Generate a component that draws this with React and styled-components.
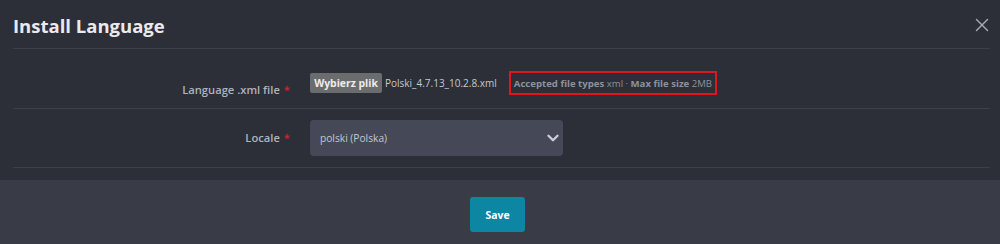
import React from 'react'
import styled, { createGlobalStyle } from 'styled-components'
import { ChevronDown, X } from 'lucide-react'

const GlobalStyle = createGlobalStyle`
  html, body {
    margin: 0;
    padding: 0;
    background: #2c2f38;
    font-family: "Open Sans", "Liberation Sans", sans-serif;
  }
`

const Modal = styled.div`
  width: 1000px;
  height: 244px;
  display: flex;
  flex-direction: column;
  background: #2c2f38;
`

const Header = styled.div`
  height: 48px;
  margin: 0 10px 0 13px;
  border-bottom: 1px solid #3c404b;
  display: flex;
  align-items: center;
  justify-content: space-between;
`

const Title = styled.h1`
  margin: 2px 0 0 0;
  font-size: 18.5px;
  font-weight: 700;
  color: #e9eaed;
`

const CloseButton = styled.button`
  border: 0;
  background: none;
  padding: 0;
  margin-right: -3px;
  margin-top: 1px;
  display: flex;
  color: #a4a9b2;
  cursor: pointer;
`

const Body = styled.div`
  margin: 0 10px 0 13px;
  padding-bottom: 12px;
`

const Row = styled.div`
  display: grid;
  grid-template-columns: 277px 1fr;
  column-gap: 20px;
  align-items: center;
  padding: ${p => p.$pad};
  border-bottom: 1px solid #3c404b;
`

const Label = styled.label`
  text-align: right;
  font-size: 11.2px;
  line-height: 16px;
  font-weight: 600;
  color: #aeb3bd;
  margin-top: ${p => p.$drop || 0}px;
  margin-bottom: -${p => p.$drop || 0}px;
`

const Required = styled.span`
  color: #d0262e;
  margin-left: 4px;
`

const FileControl = styled.div`
  display: flex;
  align-items: center;
  height: 20px;
`

const FileButton = styled.span`
  width: 72px;
  height: 20px;
  display: flex;
  align-items: center;
  justify-content: center;
  background: #6b6c6e;
  border-radius: 2px;
  font-size: 10.4px;
  font-weight: 700;
  color: #ececec;
`

const FileName = styled.span`
  margin-left: 3px;
  font-size: 10px;
  color: #c6c8cc;
`

const Hint = styled.div`
  margin-left: 12px;
  height: 24px;
  box-sizing: border-box;
  padding: 0 3px;
  display: flex;
  align-items: center;
  border: 2px solid #e0161f;
  font-size: 9.6px;
  color: #8c929d;
  white-space: pre;
`

const Strong = styled.b`
  font-weight: 700;
`

const Select = styled.div`
  width: 253px;
  height: 36px;
  box-sizing: border-box;
  padding: 0 1px 0 10px;
  display: flex;
  align-items: center;
  justify-content: space-between;
  background: #454957;
  border-radius: 4px;
  font-size: 10.2px;
  color: #c3c7ce;
`

const Footer = styled.div`
  flex: 1;
  background: #393c47;
  display: flex;
  justify-content: center;
  align-items: flex-start;
  padding: 17px 5px 0 0;
`

const SaveButton = styled.button`
  width: 55px;
  height: 35px;
  border: 0;
  border-radius: 3px;
  background: #0c86a2;
  color: #ffffff;
  font-family: inherit;
  font-size: 10.4px;
  font-weight: 700;
  cursor: pointer;
`

export default function App() {
  return (
    <>
      <GlobalStyle />
      <Modal>
        <Header>
          <Title>Install Language</Title>
          <CloseButton aria-label="Close">
            <X size={22} strokeWidth={1.6} />
          </CloseButton>
        </Header>
        <Body>
          <Row $pad="24px 0 15px">
            <Label $drop={7}>
              Language .xml file<Required>*</Required>
            </Label>
            <FileControl>
              <FileButton>Wybierz plik</FileButton>
              <FileName>Polski_4.7.13_10.2.8.xml</FileName>
              <Hint>
                <Strong>Accepted file types</Strong> xml · <Strong>Max file size</Strong> 2MB
              </Hint>
            </FileControl>
          </Row>
          <Row $pad="11px 0 11px">
            <Label>
              Locale<Required>*</Required>
            </Label>
            <Select>
              <span>polski (Polska)</span>
              <ChevronDown size={18} strokeWidth={3.2} color="#c9ccd3" />
            </Select>
          </Row>
        </Body>
        <Footer>
          <SaveButton>Save</SaveButton>
        </Footer>
      </Modal>
    </>
  )
}
